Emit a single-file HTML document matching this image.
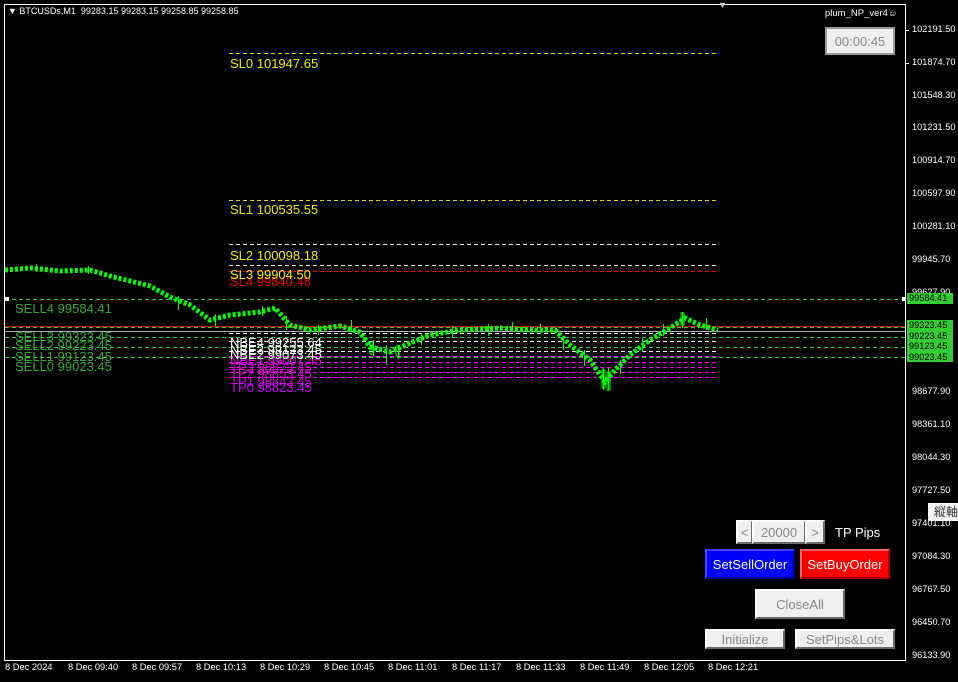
<!DOCTYPE html>
<html><head><meta charset="utf-8"><style>
body{margin:0;width:958px;height:682px;background:#000;overflow:hidden;font-family:"Liberation Sans",Arial,sans-serif;position:relative}
.a{position:absolute;white-space:nowrap}
.ax{font-size:9.2px;color:#fff;left:912px}
.tm{font-size:9.3px;color:#fff;top:662px}
.lb{font-size:13px;line-height:13px}
.btn{position:absolute;box-sizing:border-box;background:#efefef;border:2px solid;border-color:#fff #6a6a6a #6a6a6a #fff;color:#888;font-size:13px;display:flex;align-items:center;justify-content:center}
.gb{position:absolute;left:907px;width:44px;background:#3c3;color:#000;font-size:9.2px;line-height:10px;padding-left:2px}
</style></head><body>
<svg class="a" style="left:0;top:0" width="958" height="682">
<rect x="4.5" y="4.5" width="901" height="656" fill="none" stroke="#fff"/>
<g stroke-dasharray="4,3" stroke-width="1">
<line x1="229" x2="718" y1="53.5" y2="53.5" stroke="#dd0"/>
<line x1="229" x2="718" y1="200.5" y2="200.5" stroke="#dd0"/>
<line x1="229" x2="718" y1="244.5" y2="244.5" stroke="#eed"/>
<line x1="229" x2="718" y1="265.5" y2="265.5" stroke="#eed"/>
<line x1="229" x2="718" y1="271.5" y2="271.5" stroke="#e00"/>
<line x1="5" x2="905" y1="299.5" y2="299.5" stroke="#3c3"/>
<line x1="5" x2="905" y1="337.5" y2="337.5" stroke="#3c3"/>
<line x1="5" x2="905" y1="347.5" y2="347.5" stroke="#3c3"/>
<line x1="5" x2="905" y1="357.5" y2="357.5" stroke="#3c3"/>
<line x1="229" x2="718" y1="333.5" y2="333.5" stroke="#fff"/>
<line x1="229" x2="718" y1="341.5" y2="341.5" stroke="#fff"/>
<line x1="229" x2="718" y1="351.5" y2="351.5" stroke="#fff"/>
<line x1="229" x2="718" y1="356.5" y2="356.5" stroke="#f0f"/>
<line x1="229" x2="718" y1="362.5" y2="362.5" stroke="#f0f"/>
<line x1="229" x2="718" y1="367.5" y2="367.5" stroke="#f0f"/>
<line x1="229" x2="718" y1="372.5" y2="372.5" stroke="#f0f"/>
<line x1="229" x2="718" y1="377.5" y2="377.5" stroke="#f0f"/>
</g>
<line x1="5" x2="905" y1="327.5" y2="327.5" stroke="#3c3" stroke-dasharray="4,3"/>
<line x1="5" x2="905" y1="326.5" y2="326.5" stroke="#d00"/>
<line x1="5" x2="905" y1="331.5" y2="331.5" stroke="#aab"/>
<polyline fill="none" stroke="#0f0" stroke-width="5" stroke-dasharray="3,2" points="5,270 30,268 60,271 90,270 110,276 150,286 170,297 190,305 210,320 230,315 260,312 275,308 290,325 310,330 340,326 360,332 370,347 390,352 410,343 430,335 460,330 500,328 530,330 555,330 570,345 590,360 605,382 615,370 630,355 650,340 670,328 685,318 700,325 718,330"/>
<g stroke="#0f0" fill="none">
<path d="M36.5 264v8M88.5 266v8M178.5 296v14M215.5 314v12M262.5 306v10M286.5 316v14M318.5 325v10M351.5 320v12M373.5 340v16M386.5 345v20M398.5 345v14M421.5 333v12M452.5 326v12M488.5 324v12M512.5 322v10M540.5 324v10M563.5 336v14M584.5 350v16M603.5 368v22M608.5 368v22M620.5 360v14M642.5 338v14M663.5 324v12M682.5 312v16M706.5 318v12"/>
<rect x="602" y="370" width="3" height="18"/><rect x="607" y="372" width="3" height="18"/><rect x="681" y="313" width="3" height="12"/><rect x="370" y="342" width="3" height="12"/><rect x="396" y="346" width="3" height="10"/>
</g>
<g stroke="#fff">
<line x1="905" x2="909" y1="30.5" y2="30.5"/><line x1="905" x2="909" y1="63.5" y2="63.5"/>
</g>
<rect x="5" y="297" width="4" height="4" fill="#fff"/>
<rect x="902" y="297" width="4" height="4" fill="#fff"/>
</svg>
<div class="a" style="left:8px;top:6px;font-size:9px;color:#fff">▼ BTCUSDs,M1&nbsp; 99283.15 99283.15 99258.85 99258.85</div>
<div class="a" style="left:718px;top:0;font-size:9px;color:#ccc">▼</div>
<div class="a" style="left:825px;top:8px;font-size:9.5px;color:#fff">plum_NP_ver4☺</div>
<div class="btn" style="left:825px;top:27px;width:70px;height:28px;font-size:13px;border-color:#999">00:00:45</div>
<div class="a ax" style="top:24px">102191.50</div>
<div class="a ax" style="top:57px">101874.70</div>
<div class="a ax" style="top:90px">101548.30</div>
<div class="a ax" style="top:122px">101231.50</div>
<div class="a ax" style="top:155px">100914.70</div>
<div class="a ax" style="top:188px">100597.90</div>
<div class="a ax" style="top:221px">100281.10</div>
<div class="a ax" style="top:254px">99945.70</div>
<div class="a ax" style="top:287px">99627.90</div>
<div class="a ax" style="top:386px">98677.90</div>
<div class="a ax" style="top:419px">98361.10</div>
<div class="a ax" style="top:452px">98044.30</div>
<div class="a ax" style="top:485px">97727.50</div>
<div class="a ax" style="top:518px">97401.10</div>
<div class="a ax" style="top:551px">97084.30</div>
<div class="a ax" style="top:584px">96767.50</div>
<div class="a ax" style="top:617px">96450.70</div>
<div class="a ax" style="top:650px">96133.90</div>
<div class="gb" style="top:293px;height:11px">99584.41</div>
<div class="gb" style="top:320px;height:42px;line-height:10.5px">99323.45<br>99223.45<br>99123.45<br>99023.45</div>
<div class="a" style="left:928px;top:503px;width:30px;height:18px;background:#f4f4f4;color:#333;font-size:12px;font-family:'Liberation Sans','Noto Sans CJK JP',sans-serif;line-height:18px;padding-left:6px">縦軸</div>
<div class="a tm" style="left:5px">8 Dec 2024</div>
<div class="a tm" style="left:68px">8 Dec 09:40</div>
<div class="a tm" style="left:132px">8 Dec 09:57</div>
<div class="a tm" style="left:196px">8 Dec 10:13</div>
<div class="a tm" style="left:260px">8 Dec 10:29</div>
<div class="a tm" style="left:324px">8 Dec 10:45</div>
<div class="a tm" style="left:388px">8 Dec 11:01</div>
<div class="a tm" style="left:452px">8 Dec 11:17</div>
<div class="a tm" style="left:516px">8 Dec 11:33</div>
<div class="a tm" style="left:580px">8 Dec 11:49</div>
<div class="a tm" style="left:644px">8 Dec 12:05</div>
<div class="a tm" style="left:708px">8 Dec 12:21</div>
<div class="a lb" style="left:230px;top:57px;color:#ee0">SL0 101947.65</div>
<div class="a lb" style="left:230px;top:203px;color:#ee0">SL1 100535.55</div>
<div class="a lb" style="left:230px;top:249px;color:#ee0">SL2 100098.18</div>
<div class="a lb" style="left:230px;top:275px;color:#e00">SL4 99840.48</div>
<div class="a lb" style="left:230px;top:268px;color:#ee0">SL3 99904.50</div>
<div class="a lb" style="left:15px;top:302px;color:#3a3">SELL4 99584.41</div>
<div class="a lb" style="left:15px;top:330px;color:#3a3">SELL3 99323.45</div>
<div class="a lb" style="left:15px;top:339px;color:#3a3">SELL2 99223.45</div>
<div class="a lb" style="left:15px;top:350px;color:#3a3">SELL1 99123.45</div>
<div class="a lb" style="left:15px;top:360px;color:#3a3">SELL0 99023.45</div>
<div class="a lb" style="left:230px;top:361px;color:#c0c">TP3 98873.45</div>
<div class="a lb" style="left:230px;top:367px;color:#d0d">TP2 98853.45</div>
<div class="a lb" style="left:230px;top:375px;color:#d0d">TP1 98843.45</div>
<div class="a lb" style="left:230px;top:381px;color:#c0f">TP0 98823.45</div>
<div class="a lb" style="left:230px;top:354px;color:#e0e">NBE1 99007.45</div>
<div class="a lb" style="left:230px;top:348px;color:#fff">NBE2 99073.45</div>
<div class="a lb" style="left:230px;top:343px;color:#fff">NBE3 99123.45</div>
<div class="a lb" style="left:230px;top:336px;color:#fff">NBE4 99255.64</div>
<div class="btn" style="left:736px;top:520px;width:17px;height:24px">&lt;</div>
<div class="btn" style="left:752px;top:520px;width:54px;height:24px">20000</div>
<div class="btn" style="left:805px;top:520px;width:20px;height:24px">&gt;</div>
<div class="a" style="left:835px;top:525px;font-size:13px;color:#fff">TP Pips</div>
<div class="btn" style="left:705px;top:549px;width:90px;height:30px;background:#00f;color:#fff;border-color:#44f #008 #008 #44f">SetSellOrder</div>
<div class="btn" style="left:800px;top:549px;width:90px;height:30px;background:#f00;color:#fff;border-color:#f66 #a00 #a00 #f66">SetBuyOrder</div>
<div class="btn" style="left:755px;top:589px;width:90px;height:30px">CloseAll</div>
<div class="btn" style="left:705px;top:629px;width:80px;height:20px">Initialize</div>
<div class="btn" style="left:795px;top:629px;width:100px;height:20px">SetPips&amp;Lots</div>
</body></html>
